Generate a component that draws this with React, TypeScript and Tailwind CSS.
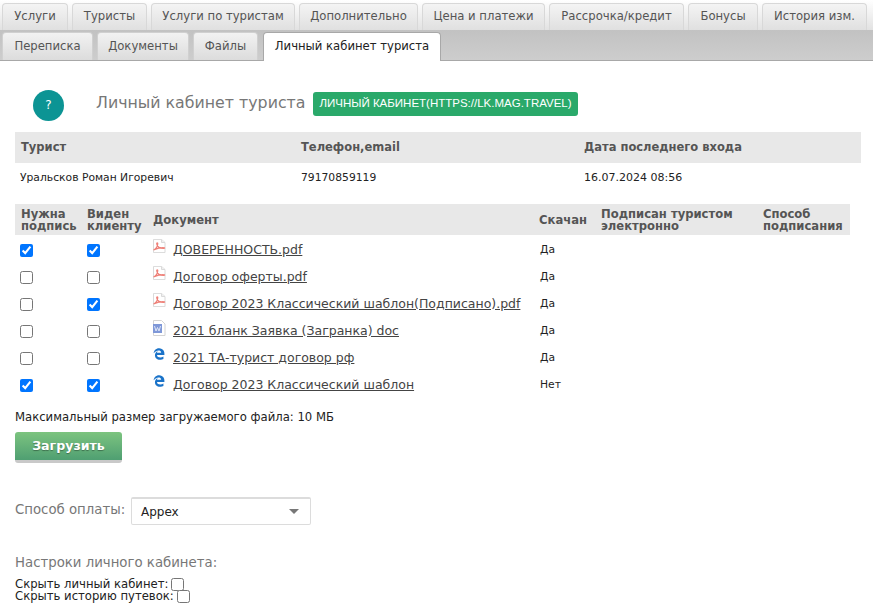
import { FaEdgeLegacy } from 'react-icons/fa6';

const topTabs = [
  { label: 'Услуги', w: 'w-[66px]' },
  { label: 'Туристы', w: 'w-[75px]' },
  { label: 'Услуги по туристам', w: 'w-[144px]' },
  { label: 'Дополнительно', w: 'w-[119px]' },
  { label: 'Цена и платежи', w: 'w-[123px]' },
  { label: 'Рассрочка/кредит', w: 'w-[135px]' },
  { label: 'Бонусы', w: 'w-[70px]' },
  { label: 'История изм.', w: 'w-[105px]' },
];

const bottomTabs = [
  { label: 'Переписка', w: 'w-[91px]' },
  { label: 'Документы', w: 'w-[92px]' },
  { label: 'Файлы', w: 'w-[65px]' },
];

const docs = [
  { sign: true, visible: true, icon: 'pdf', name: 'ДОВЕРЕННОСТЬ.pdf', loaded: 'Да' },
  { sign: false, visible: false, icon: 'pdf', name: 'Договор оферты.pdf', loaded: 'Да' },
  { sign: false, visible: true, icon: 'pdf', name: 'Договор 2023 Классический шаблон(Подписано).pdf', loaded: 'Да' },
  { sign: false, visible: false, icon: 'doc', name: '2021 бланк Заявка (Загранка) doc', loaded: 'Да' },
  { sign: false, visible: false, icon: 'edge', name: '2021 ТА-турист договор рф', loaded: 'Да' },
  { sign: true, visible: true, icon: 'edge', name: 'Договор 2023 Классический шаблон', loaded: 'Нет' },
];

function PdfIcon() {
  return (
    <svg width="14" height="14" viewBox="0 0 14 16" preserveAspectRatio="none" className="block">
      <path d="M1.5.5h8l3.500 3.500v11.500h-11.500z" fill="#fff" stroke="#d8d8d8" />
      <path d="M9.5.5v3.500h3.500" fill="#f0f0f0" stroke="#d8d8d8" />
      <path
        d="M1.500 12.500c2.500-1 4-3.500 4.200-7 .1-1.500-1-1.500-.9 0 .3 2.500 2.500 5 6.700 5.300 1.500.1 1.500-1 0-1-3-.1-6.500 1-10 2.700z"
        fill="none"
        stroke="#ee8078"
        strokeWidth="1.300"
      />
    </svg>
  );
}

function DocIcon() {
  return (
    <svg width="14" height="16" viewBox="0 0 14 16" className="block">
      <path d="M1.500.5h8l3.500 3.500v11.500h-11.500z" fill="#fff" stroke="#d4d4d4" />
      <rect x="1" y="4" width="9" height="9" fill="#7f98d8" />
      <path d="M2.500 6l1.500 5 1.500-3.500 1.500 3.500 1.500-5" fill="none" stroke="#e8edf8" strokeWidth="0.900" />
    </svg>
  );
}

function FileIcon({ kind }: { kind: string }) {
  if (kind === 'pdf') return <PdfIcon />;
  if (kind === 'doc') return <DocIcon />;
  return <FaEdgeLegacy className="block h-[12px] w-[12px] mt-[1px] ml-[1px] text-[#1a73c9]" />;
}

export default function App() {
  return (
    <div className="w-[873px] h-[611px] overflow-hidden bg-white text-[11.65px] text-[#222] [font-family:DejaVu_Sans,sans-serif]">
      <div className="h-[61px] border-b border-[#a8a8a8]">
        <div className="h-[30px] pl-[2px] pt-[3px] bg-gradient-to-b from-white to-[#e2e2e2]">
          <div className="flex gap-[4px] h-[27px]">
            {topTabs.map((t) => (
              <div key={t.label} className={`${t.w} flex items-center justify-center rounded-t-[4px] border border-b-0 border-[#d8d8d8] bg-gradient-to-b from-[#f4f4f4] to-[#e0e0e0] text-[#555] whitespace-nowrap`}>
                {t.label}
              </div>
            ))}
          </div>
        </div>
        <div className="h-[30px] pl-[2px] pt-[2px] bg-gradient-to-b from-[#c2c2c2] to-[#cdcdcd]">
          <div className="flex gap-[4px] h-[28px]">
            {bottomTabs.map((t) => (
              <div key={t.label} className={`${t.w} flex items-center justify-center rounded-t-[4px] border border-b-0 border-[#d0d0d0] bg-gradient-to-b from-[#f2f2f2] to-[#dcdcdc] text-[#555] whitespace-nowrap`}>
                {t.label}
              </div>
            ))}
            <div className="w-[178px] h-[29px] ml-[1px] flex items-center justify-center rounded-t-[4px] border border-b-0 border-[#a8a8a8] bg-white text-[#222] whitespace-nowrap">
              Личный кабинет туриста
            </div>
          </div>
        </div>
      </div>

      <div className="flex items-center h-[32px] mt-[28px] pl-[33px]">
        <div className="w-[31px] h-[31px] rounded-full bg-[#0c9494] text-white flex items-center justify-center text-[12px]">?</div>
        <div className="ml-[32px] mb-[4px] text-[15.8px] text-[#777] whitespace-nowrap">Личный кабинет туриста</div>
        <div className="ml-[8px] mb-[2px] h-[24px] px-[6px] rounded-[3px] bg-[#2aa96a] text-white text-[11.5px] flex items-center whitespace-nowrap [font-family:Liberation_Sans,sans-serif]">
          ЛИЧНЫЙ КАБИНЕТ(HTTPS://LK.MAG.TRAVEL)
        </div>
      </div>

      <div className="mx-[15px] mt-[11px] w-[846px]">
        <div className="grid grid-cols-[286px_283px_1fr] h-[31px] pt-[1px] items-center bg-[#e8e8e8] font-bold text-[#555] text-[11.5px]">
          <div className="pl-[6px]">Турист</div>
          <div>Телефон,email</div>
          <div>Дата последнего входа</div>
        </div>
        <div className="grid grid-cols-[286px_283px_1fr] h-[29px] pt-[2px] items-center text-[10.75px]">
          <div className="pl-[5px]">Уральсков Роман Игоревич</div>
          <div>79170859119</div>
          <div className="text-[11px]">16.07.2024 08:56</div>
        </div>
      </div>

      <div className="mx-[15px] mt-[12px] w-[835px]">
        <div className="grid grid-cols-[66px_66px_386px_62px_162px_1fr] h-[31px] items-center bg-[#e8e8e8] font-bold text-[#555] text-[11.6px] leading-[12px]">
          <div className="pl-[6px]">Нужна подпись</div>
          <div className="pl-[6px]">Виден клиенту</div>
          <div className="pl-[6px]">Документ</div>
          <div className="pl-[6px]">Скачан</div>
          <div className="pl-[6px]">Подписан туристом электронно</div>
          <div className="pl-[6px]">Способ подписания</div>
        </div>
        <div className="pt-[2px]">
          {docs.map((d) => (
            <div key={d.name} className="grid grid-cols-[66px_66px_386px_62px_162px_1fr] h-[27px] items-center">
              <div className="pl-[5px] flex"><input type="checkbox" defaultChecked={d.sign} /></div>
              <div className="pl-[6px] flex"><input type="checkbox" defaultChecked={d.visible} /></div>
              <div className="pl-[5px] flex items-start gap-[6px] whitespace-nowrap">
                <span className="mt-[-4px] w-[15px] shrink-0"><FileIcon kind={d.icon} /></span>
                <a href="#" className="-mt-[1px] underline text-[#444] text-[12.5px] leading-[16px]">{d.name}</a>
              </div>
              <div className="pl-[7px] text-[10.75px]">{d.loaded}</div>
            </div>
          ))}
        </div>

        <div className="mt-[10px] leading-[16px]">Максимальный размер загружаемого файла: 10 МБ</div>
        <div className="mt-[7px] w-[107px] h-[31px] flex items-center justify-center rounded-[3px] bg-gradient-to-b from-[#7cc47f] to-[#4f9f72] border-b-[3px] border-[#c9c9c9] text-white font-bold text-[12.6px] [text-shadow:0_1px_1px_rgba(0,0,0,0.35)]">
          Загрузить
        </div>
        <div className="mt-[34px] flex items-start">
          <span className="w-[110px] text-[13.3px] text-[#777] mt-[3px] whitespace-nowrap">Способ оплаты:</span>
          <div className="ml-[6px] w-[180px] h-[28px] flex items-center justify-between pl-[9px] pr-[11px] rounded-[2px] border border-[#dcdcdc] border-t-2 text-[12px]">
            Appex
            <span className="w-0 h-0 border-x-[5px] border-x-transparent border-t-[5px] border-t-[#777]" />
          </div>
        </div>
        <div className="mt-[29px] text-[13.3px] text-[#777] leading-[18px]">Настроки личного кабинета:</div>
        <div className="mt-[6px] h-[12px] flex items-center gap-[3px] whitespace-nowrap"><span className="leading-[12px]">Скрыть личный кабинет:</span><input type="checkbox" /></div>
        <div className="h-[12px] flex items-center gap-[3px] whitespace-nowrap"><span className="leading-[12px]">Скрыть историю путевок:</span><input type="checkbox" /></div>
      </div>
    </div>
  );
}
